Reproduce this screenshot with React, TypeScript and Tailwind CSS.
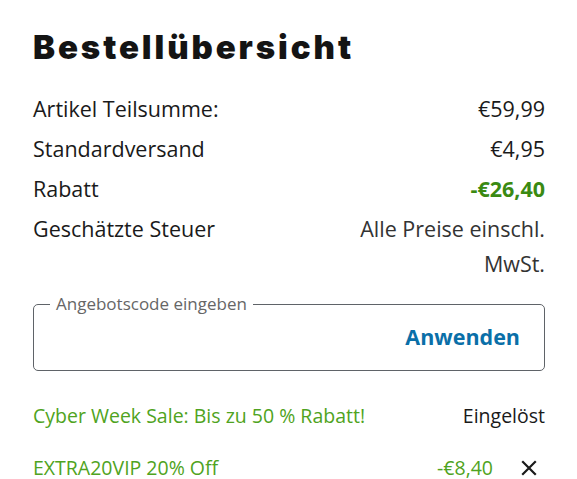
export default function App() {
  const rows = [
    { label: "Artikel Teilsumme:", value: "€59,99" },
    { label: "Standardversand", value: "€4,95" },
    { label: "Rabatt", value: "-€26,40", discount: true },
  ];

  return (
    <div className="w-[577px] h-[479px] overflow-hidden bg-white pl-[33px] pr-[32px] pt-[28px] text-[#1a1a1a] font-['Open_Sans','Noto_Sans',sans-serif]">
      <h1 className="font-['Inter',sans-serif] font-black text-[33px] leading-[38px] tracking-[2.9px] text-[#141414]">
        Bestellübersicht
      </h1>

      {/* Summary rows */}
      <div className="mt-[25px] flex flex-col gap-[5px] text-[21.5px] leading-[35px]">
        {rows.map((r) => (
          <div key={r.label} className="flex justify-between">
            <span>{r.label}</span>
            <span className={r.discount ? "font-bold text-[#3a8a12]" : ""}>{r.value}</span>
          </div>
        ))}
        <div className="flex justify-between">
          <span>Geschätzte Steuer</span>
          <span className="text-right text-[#333]">
            Alle Preise einschl.
            <br />
            MwSt.
          </span>
        </div>
      </div>

      {/* Coupon input */}
      <fieldset className="mt-[14px] h-[76px] border border-[#5f6368] rounded-[5px] pl-[16px] pr-[24px] flex items-center justify-end">
        <legend className="px-[6px] text-[17px] leading-[18px] text-[#666]">Angebotscode eingeben</legend>
        <span className="-mt-[8px] text-[21.5px] font-bold text-[#0a6fa8]">Anwenden</span>
      </fieldset>

      {/* Applied promotions */}
      <div className="mt-[33px] flex justify-between text-[19.5px] leading-[24px]">
        <span className="text-[#4fa321]">Cyber Week Sale: Bis zu 50 % Rabatt!</span>
        <span className="text-[#1a1a1a]">Eingelöst</span>
      </div>
      <div className="mt-[28px] flex items-center justify-between text-[19.5px] leading-[24px]">
        <span className="text-[#4fa321]">EXTRA20VIP 20% Off</span>
        <div className="flex items-center gap-[28px] pr-[8px]">
          <span className="text-[#4fa321]">-€8,40</span>
          <svg width="16" height="16" viewBox="0 0 16 16" className="text-[#1a1a1a]">
            <path d="M2 2L14 14M14 2L2 14" stroke="currentColor" strokeWidth="2.2" strokeLinecap="square" />
          </svg>
        </div>
      </div>
    </div>
  );
}
